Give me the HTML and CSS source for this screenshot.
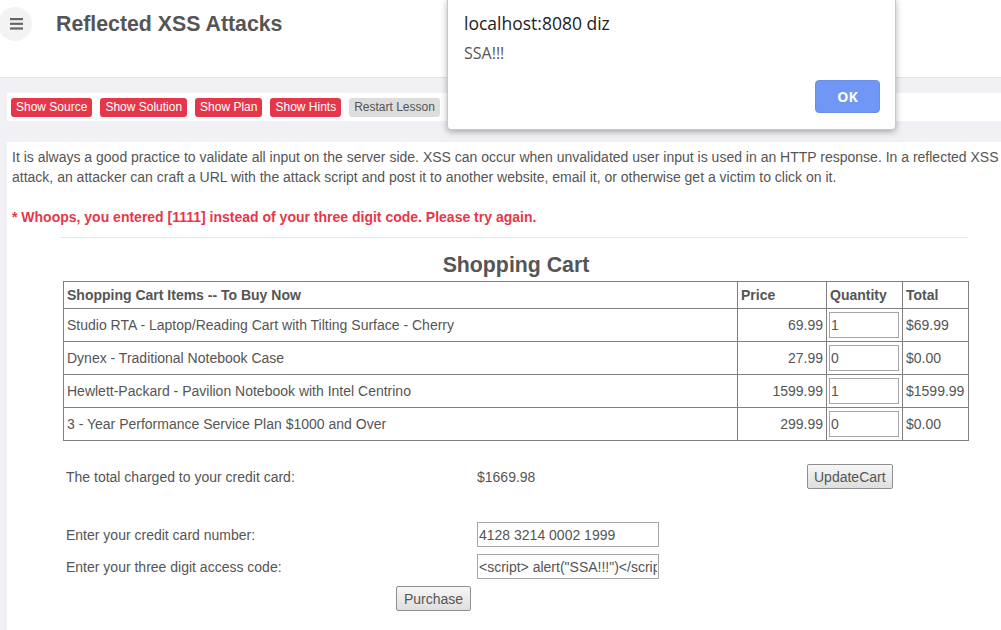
FILE: index.html
```html
<!DOCTYPE html>
<html>
<head>
<meta charset="utf-8">
<title>Reflected XSS Attacks</title>
<link rel="stylesheet" href="styles.css">
</head>
<body>
<header class="header">
  <div class="menu-btn">
    <svg width="13" height="12" viewBox="0 0 13 12"><rect x="0" y="0" width="13" height="2.2" fill="#666"/><rect x="0" y="4.7" width="13" height="2.2" fill="#666"/><rect x="0" y="9.4" width="13" height="2.2" fill="#666"/></svg>
  </div>
  <h1 class="title">Reflected XSS Attacks</h1>
</header>

<div class="toolbar">
  <span class="btn btn-red">Show Source</span>
  <span class="btn btn-red">Show Solution</span>
  <span class="btn btn-red">Show Plan</span>
  <span class="btn btn-red">Show Hints</span>
  <span class="btn btn-gray">Restart Lesson</span>
</div>

<main class="content">
  <p class="intro">It is always a good practice to validate all input on the server side. XSS can occur when unvalidated user input is used in an HTTP response. In a reflected XSS attack, an attacker can craft a URL with the attack script and post it to another website, email it, or otherwise get a victim to click on it.</p>
  <p class="error">* Whoops, you entered [1111] instead of your three digit code. Please try again.</p>
  <hr class="divider">
  <h2 class="cart-title">Shopping Cart</h2>
  <table class="cart">
    <colgroup>
      <col class="c-item"><col class="c-price"><col class="c-qty"><col class="c-total">
    </colgroup>
    <tr class="head">
      <th>Shopping Cart Items -- To Buy Now</th><th>Price</th><th>Quantity</th><th>Total</th>
    </tr>
    <tr>
      <td>Studio RTA - Laptop/Reading Cart with Tilting Surface - Cherry</td><td class="num">69.99</td><td class="qty"><input class="qty-input" type="text" value="1"></td><td>$69.99</td>
    </tr>
    <tr>
      <td>Dynex - Traditional Notebook Case</td><td class="num">27.99</td><td class="qty"><input class="qty-input" type="text" value="0"></td><td>$0.00</td>
    </tr>
    <tr>
      <td>Hewlett-Packard - Pavilion Notebook with Intel Centrino</td><td class="num">1599.99</td><td class="qty"><input class="qty-input" type="text" value="1"></td><td>$1599.99</td>
    </tr>
    <tr>
      <td>3 - Year Performance Service Plan $1000 and Over</td><td class="num">299.99</td><td class="qty"><input class="qty-input" type="text" value="0"></td><td>$0.00</td>
    </tr>
  </table>

  <div class="checkout">
    <div class="cell label">The total charged to your credit card:</div>
    <div class="cell value">$1669.98</div>
    <div class="cell"><button class="gbtn gbtn-update">UpdateCart</button></div>
    <div class="spacer"></div>
    <div class="cell label">Enter your credit card number:</div>
    <div class="cell value"><input class="field" type="text" value="4128 3214 0002 1999"></div>
    <div class="cell"></div>
    <div class="cell label">Enter your three digit access code:</div>
    <div class="cell value"><input class="field" type="text" value="&lt;script&gt; alert(&quot;SSA!!!&quot;)&lt;/script&gt;"></div>
    <div class="cell"></div>
    <div class="cell purchase"><button class="gbtn">Purchase</button></div>
  </div>
</main>

<div class="dialog">
  <div class="dlg-title">localhost:8080 diz</div>
  <div class="dlg-msg">SSA!!!</div>
  <div class="dlg-actions"><button class="ok-btn">OK</button></div>
</div>
</body>
</html>
```

FILE: styles.css
```css
html, body {
  margin: 0;
  padding: 0;
}
body {
  width: 1001px;
  height: 630px;
  overflow: hidden;
  background: #f0f0f5;
  font-family: "Liberation Sans", Arial, sans-serif;
  font-size: 14px;
  color: #555;
  position: relative;
}

.header {
  height: 77px;
  background: #fff;
  border-bottom: 1px solid #e3e3e8;
  display: flex;
  align-items: flex-start;
}
.menu-btn {
  width: 34px;
  height: 34px;
  border-radius: 50%;
  background: #f3f3f3;
  margin: 7px 0 0 -2px;
  display: flex;
  align-items: center;
  justify-content: center;
}
.menu-btn svg {
  display: block;
  margin-left: 2px;
}
.title {
  margin: 12px 0 0 24px;
  font-size: 21.3px;
  line-height: 24px;
  font-weight: bold;
  color: #555;
}

.toolbar {
  margin: 15px 0 0 7px;
  height: 28px;
  box-sizing: border-box;
  padding: 5px 4px 4px;
  background: #fff;
  display: flex;
  gap: 8px;
}
.btn {
  display: inline-block;
  height: 19px;
  line-height: 19px;
  padding: 0 5px;
  font-size: 12px;
  border-radius: 3px;
}
.btn-red {
  background: #e6374a;
  color: #fff;
}
.btn-gray {
  background: #ddd;
  color: #555;
}

.content {
  margin: 21px 0 0 7px;
  width: 1018px;
  box-sizing: border-box;
  padding: 5px 5px 40px;
  background: #fff;
}
.intro {
  margin: 0 0 20px;
  line-height: 20px;
}
.error {
  margin: 0;
  line-height: 20px;
  color: #e6374a;
  font-weight: bold;
}
.divider {
  border: 0;
  border-top: 1px solid #e6e6e6;
  width: 908px;
  margin: 10px 0 0 48px;
  height: 0;
}
.cart-title {
  margin: 15px 0 4px;
  text-align: center;
  font-size: 21.3px;
  line-height: 24px;
  font-weight: bold;
  color: #555;
}

.cart {
  width: 905px;
  margin: 0 auto;
  border-collapse: collapse;
  border: 1px solid #333;
  table-layout: fixed;
}
.c-item { width: 674px; }
.c-price { width: 89px; }
.c-qty { width: 76px; }
.c-total { width: 66px; }
.cart th, .cart td {
  border: 1px solid #808080;
  padding: 0 3px;
  text-align: left;
  white-space: nowrap;
}
.cart th {
  height: 26px;
  font-weight: bold;
}
.cart td {
  height: 32px;
}
.cart td.num {
  text-align: right;
}
.cart td.qty {
  padding: 0 2px;
}
.qty-input {
  width: 70px;
  height: 26px;
  box-sizing: border-box;
  border: 1px solid #a6a6a6;
  padding: 0 1px;
  font-family: "Liberation Sans", Arial, sans-serif;
  font-size: 14px;
  color: #555;
  display: block;
}

.checkout {
  width: 906px;
  margin: 23px auto 0;
  display: grid;
  grid-template-columns: 411px 330px 165px;
  grid-template-rows: 25px 19px 25px 25px 25px;
  row-gap: 7px;
}
.cell {
  display: flex;
  align-items: center;
  padding-left: 3px;
}
.spacer {
  grid-column: 1 / 4;
}
.purchase {
  grid-column: 1 / 3;
  justify-content: center;
  padding-left: 0;
}
.field {
  width: 182px;
  height: 25px;
  box-sizing: border-box;
  border: 1px solid #a6a6a6;
  padding: 0 1px;
  font-family: "Liberation Sans", Arial, sans-serif;
  font-size: 14px;
  color: #555;
}
.gbtn {
  height: 25px;
  padding: 0 7px;
  border: 1px solid #8f8f8f;
  border-radius: 2px;
  background: linear-gradient(#f7f7f7, #dedede);
  font-family: "Liberation Sans", Arial, sans-serif;
  font-size: 14px;
  color: #555;
}
.gbtn-update {
  padding: 0 6px;
}

.dialog {
  position: absolute;
  left: 447px;
  top: -1px;
  width: 449px;
  height: 131px;
  box-sizing: border-box;
  background: #fff;
  border: 1px solid #c8c8c8;
  border-radius: 0 0 4px 4px;
  box-shadow: 0 2px 6px rgba(0,0,0,0.3);
  padding: 0 15px 0 16px;
  font-family: "Open Sans", "Noto Sans", sans-serif;
}
.dlg-title {
  margin-top: 11px;
  font-size: 17.5px;
  line-height: 24px;
  color: #222;
}
.dlg-msg {
  margin-top: 8px;
  font-size: 16px;
  line-height: 20px;
  color: #555;
}
.dlg-actions {
  display: flex;
  justify-content: flex-end;
  margin-top: 17px;
}
.ok-btn {
  width: 65px;
  height: 33px;
  border: 1px solid #6a8fe8;
  border-radius: 4px;
  background: #7197f6;
  color: #fff;
  font-family: "Open Sans", "Noto Sans", sans-serif;
  font-weight: bold;
  font-size: 14px;
}
```
